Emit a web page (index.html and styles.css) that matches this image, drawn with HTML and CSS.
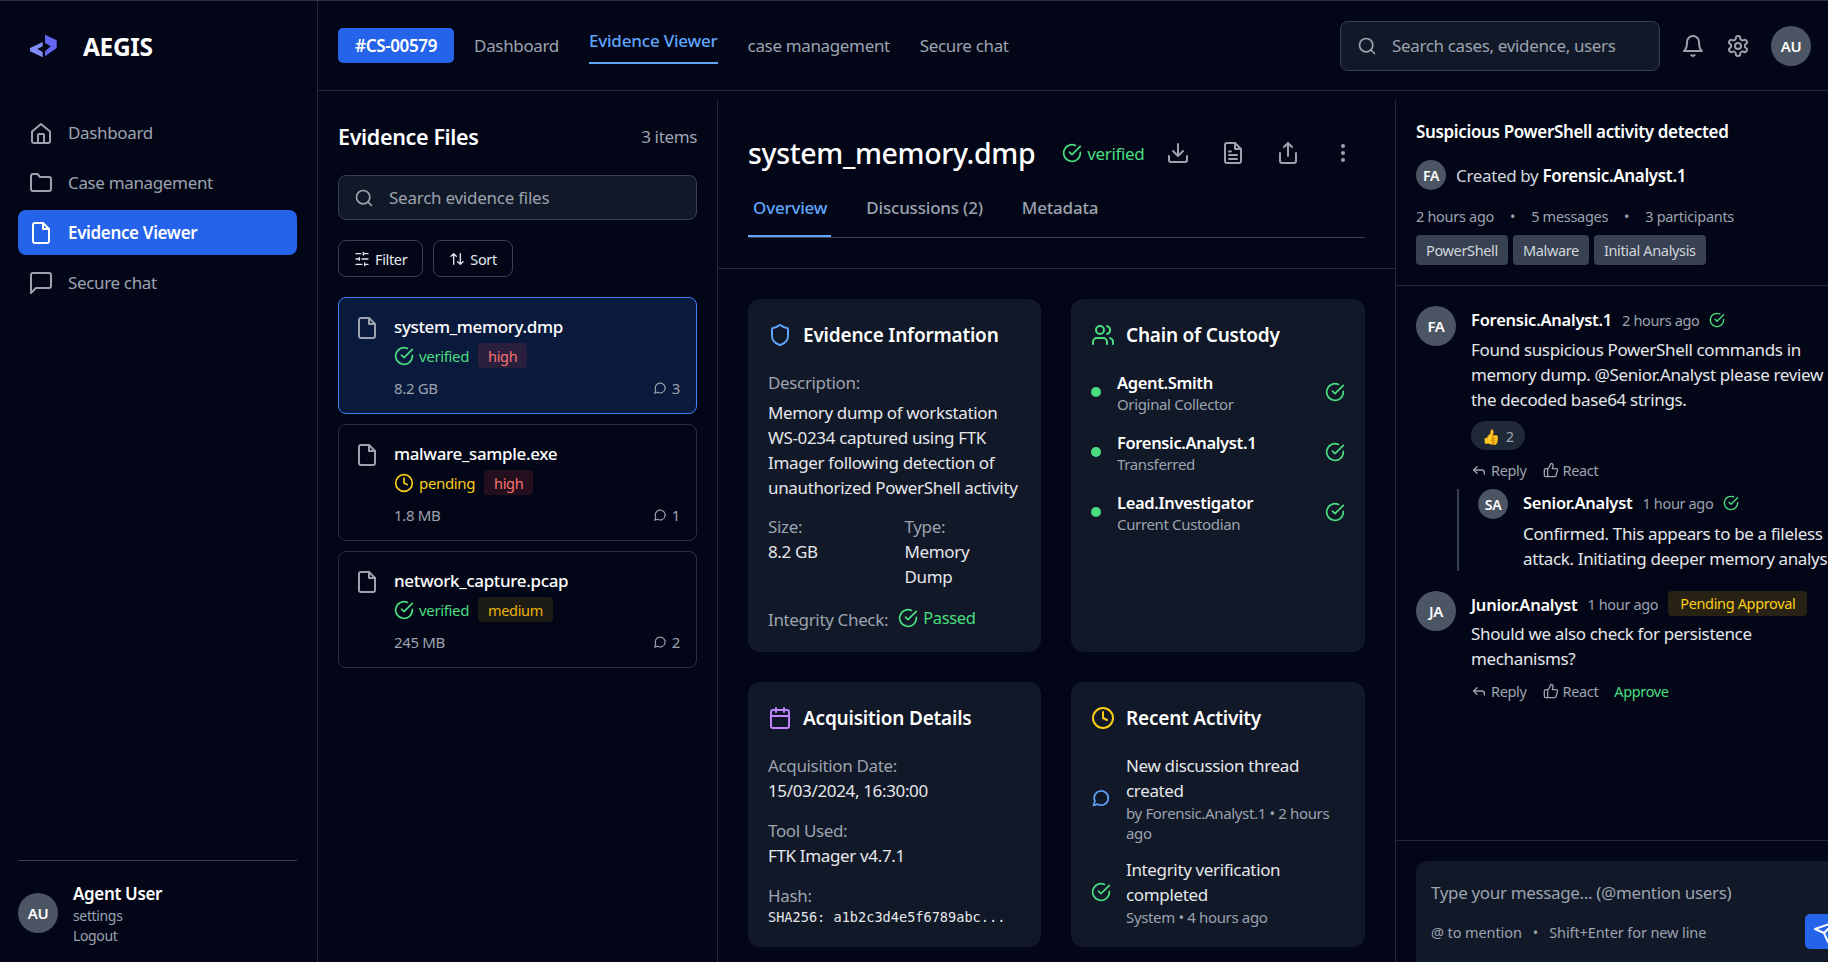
FILE: index.html
```html
<!DOCTYPE html>
<html lang="en">
<head>
    <meta charset="UTF-8">
    <meta name="viewport" content="width=device-width, initial-scale=1.0">
    <title>AEGIS - Evidence Viewer</title>
    <link rel="stylesheet" href="styles.css">
</head>
<body>
    <svg class="icon-defs" width="0" height="0">
        <symbol id="i-home" viewBox="0 0 24 24"><path d="M3 10.5 12 3l9 7.5V20a2 2 0 0 1-2 2H5a2 2 0 0 1-2-2z"/><path d="M9 22v-8a1 1 0 0 1 1-1h4a1 1 0 0 1 1 1v8"/></symbol>
        <symbol id="i-folder" viewBox="0 0 24 24"><path d="M4 20a2 2 0 0 1-2-2V5a2 2 0 0 1 2-2h4.5L11 6h9a2 2 0 0 1 2 2v10a2 2 0 0 1-2 2z"/></symbol>
        <symbol id="i-file" viewBox="0 0 24 24"><path d="M14 2H6a2 2 0 0 0-2 2v16a2 2 0 0 0 2 2h12a2 2 0 0 0 2-2V8z"/><path d="M14 2v6h6"/></symbol>
        <symbol id="i-filetext" viewBox="0 0 24 24"><path d="M14 2H6a2 2 0 0 0-2 2v16a2 2 0 0 0 2 2h12a2 2 0 0 0 2-2V8z"/><path d="M14 2v6h6"/><path d="M8 10.5h2M8 14h8M8 18h8"/></symbol>
        <symbol id="i-square" viewBox="0 0 24 24"><path d="M22 15a2 2 0 0 1-2 2H7l-5 5V4a2 2 0 0 1 2-2h16a2 2 0 0 1 2 2z"/></symbol>
        <symbol id="i-circle" viewBox="0 0 24 24"><path d="M3 21l1.7-5.1A8.5 8.5 0 1 1 8 19.4z"/></symbol>
        <symbol id="i-search" viewBox="0 0 24 24"><circle cx="11" cy="11" r="8"/><path d="m21 21-4.3-4.3"/></symbol>
        <symbol id="i-bell" viewBox="0 0 24 24"><path d="M6 8a6 6 0 0 1 12 0c0 7 3 9 3 9H3s3-2 3-9"/><path d="M10.3 21a2 2 0 0 0 3.4 0"/></symbol>
        <symbol id="i-gear" viewBox="0 0 24 24"><path d="M12.2 2h-.4a2 2 0 0 0-2 2v.2a2 2 0 0 1-1 1.7l-.4.3a2 2 0 0 1-2 0l-.2-.1a2 2 0 0 0-2.7.7l-.2.4a2 2 0 0 0 .7 2.7l.2.1a2 2 0 0 1 1 1.7v.5a2 2 0 0 1-1 1.7l-.2.1a2 2 0 0 0-.7 2.7l.2.4a2 2 0 0 0 2.7.7l.2-.1a2 2 0 0 1 2 0l.4.3a2 2 0 0 1 1 1.7v.2a2 2 0 0 0 2 2h.4a2 2 0 0 0 2-2v-.2a2 2 0 0 1 1-1.7l.4-.3a2 2 0 0 1 2 0l.2.1a2 2 0 0 0 2.7-.7l.2-.4a2 2 0 0 0-.7-2.7l-.2-.1a2 2 0 0 1-1-1.7v-.5a2 2 0 0 1 1-1.7l.2-.1a2 2 0 0 0 .7-2.7l-.2-.4a2 2 0 0 0-2.7-.7l-.2.1a2 2 0 0 1-2 0l-.4-.3a2 2 0 0 1-1-1.7V4a2 2 0 0 0-2-2z"/><circle cx="12" cy="12" r="3"/></symbol>
        <symbol id="i-check" viewBox="0 0 24 24"><path d="M22 11.1V12a10 10 0 1 1-5.9-9.100"/><path d="m9 11 3 3L22 4"/></symbol>
        <symbol id="i-clock" viewBox="0 0 24 24"><circle cx="12" cy="12" r="10"/><path d="M12 6v6l4 2"/></symbol>
        <symbol id="i-sliders" viewBox="0 0 24 24"><path d="M21 4h-7M10 4H3M21 12h-9M8 12H3M21 20h-5M12 20H3M14 2v4M8 10v4M16 18v4"/></symbol>
        <symbol id="i-updown" viewBox="0 0 24 24"><path d="m21 16-4 4-4-4M17 20V4M3 8l4-4 4 4M7 4v16"/></symbol>
        <symbol id="i-download" viewBox="0 0 24 24"><path d="M21 15v4a2 2 0 0 1-2 2H5a2 2 0 0 1-2-2v-4"/><path d="m7 10 5 5 5-5M12 15V3"/></symbol>
        <symbol id="i-share" viewBox="0 0 24 24"><path d="M4 12v8a2 2 0 0 0 2 2h12a2 2 0 0 0 2-2v-8"/><path d="m16 6-4-4-4 4M12 2v13"/></symbol>
        <symbol id="i-shield" viewBox="0 0 24 24"><path d="M20 13c0 5-3.5 7.5-7.7 9a1 1 0 0 1-.6 0C7.5 20.5 4 18 4 13V6a1 1 0 0 1 1-1c2 0 4.5-1.2 6.2-2.7a1.2 1.2 0 0 1 1.600 0C14.5 3.800 17 5 19 5a1 1 0 0 1 1 1z"/></symbol>
        <symbol id="i-users" viewBox="0 0 24 24"><path d="M16 21v-2a4 4 0 0 0-4-4H6a4 4 0 0 0-4 4v2"/><circle cx="9" cy="7" r="4"/><path d="M22 21v-2a4 4 0 0 0-3-3.900M16 3.100a4 4 0 0 1 0 7.800"/></symbol>
        <symbol id="i-calendar" viewBox="0 0 24 24"><rect x="3" y="4" width="18" height="18" rx="2"/><path d="M8 2v4M16 2v4M3 10h18"/></symbol>
        <symbol id="i-reply" viewBox="0 0 24 24"><path d="m9 17-5-5 5-5"/><path d="M20 18v-2a4 4 0 0 0-4-4H4"/></symbol>
        <symbol id="i-thumb" viewBox="0 0 24 24"><path d="M7 10v12"/><path d="M15 5.900 14 10h5.800a2 2 0 0 1 1.900 2.600l-2.300 8a2 2 0 0 1-2 1.400H4a2 2 0 0 1-2-2v-8a2 2 0 0 1 2-2h2.800a2 2 0 0 0 1.800-1.100L12 2a3 3 0 0 1 3 3.900z"/></symbol>
        <symbol id="i-send" viewBox="0 0 24 24"><path d="m22 2-7 20-4-9-9-4z"/><path d="M22 2 11 13"/></symbol>
    </svg>

    <div class="app">
        <aside class="sidebar">
            <div class="logo">
                <svg class="logo-mark" viewBox="0 0 28 24">
                    <path d="M0 14 12.7 8v4.300L7.300 15l5.400 3v5.300L0 17.300z" fill="#818cf8"/>
                    <path d="M15 .7l11.700 5.600V14L15 22.300v-5l5.700-5L15 9z" fill="#6366f1"/>
                </svg>
                <span class="logo-text">AEGIS</span>
            </div>
            <nav class="side-nav">
                <a class="side-link"><svg class="ic ic-24"><use href="#i-home"/></svg>Dashboard</a>
                <a class="side-link"><svg class="ic ic-24"><use href="#i-folder"/></svg>Case management</a>
                <a class="side-link active"><svg class="ic ic-24"><use href="#i-file"/></svg>Evidence Viewer</a>
                <a class="side-link"><svg class="ic ic-24"><use href="#i-square"/></svg>Secure chat</a>
            </nav>
            <div class="side-user">
                <div class="avatar">AU</div>
                <div class="side-user-info">
                    <div class="side-user-name">Agent User</div>
                    <div class="side-user-link">settings</div>
                    <div class="side-user-link">Logout</div>
                </div>
            </div>
        </aside>

        <div class="main">
            <header class="topbar">
                <span class="case-badge">#CS-00579</span>
                <a class="top-link">Dashboard</a>
                <a class="top-link active">Evidence Viewer</a>
                <a class="top-link">case management</a>
                <a class="top-link">Secure chat</a>
                <div class="top-right">
                    <div class="top-search"><svg class="ic ic-20"><use href="#i-search"/></svg><span>Search cases, evidence, users</span></div>
                    <svg class="ic ic-24 top-icon"><use href="#i-bell"/></svg>
                    <svg class="ic ic-24 top-icon"><use href="#i-gear"/></svg>
                    <div class="avatar">AU</div>
                </div>
            </header>

            <div class="columns">
                <section class="files">
                    <div class="files-head">
                        <h2>Evidence Files</h2>
                        <span class="files-count">3 items</span>
                    </div>
                    <div class="files-search"><svg class="ic ic-20"><use href="#i-search"/></svg><span>Search evidence files</span></div>
                    <div class="files-tools">
                        <button class="tool-btn"><svg class="ic ic-16"><use href="#i-sliders"/></svg>Filter</button>
                        <button class="tool-btn"><svg class="ic ic-16"><use href="#i-updown"/></svg>Sort</button>
                    </div>
                    <div class="file-card selected">
                        <svg class="ic ic-24 file-icon"><use href="#i-file"/></svg>
                        <div class="file-body">
                            <div class="file-name">system_memory.dmp</div>
                            <div class="file-status">
                                <span class="status green"><svg class="ic ic-20"><use href="#i-check"/></svg>verified</span>
                                <span class="level high">high</span>
                            </div>
                            <div class="file-meta"><span>8.2 GB</span><span class="file-count"><svg class="ic ic-14"><use href="#i-circle"/></svg>3</span></div>
                        </div>
                    </div>
                    <div class="file-card">
                        <svg class="ic ic-24 file-icon"><use href="#i-file"/></svg>
                        <div class="file-body">
                            <div class="file-name">malware_sample.exe</div>
                            <div class="file-status">
                                <span class="status yellow"><svg class="ic ic-20"><use href="#i-clock"/></svg>pending</span>
                                <span class="level high">high</span>
                            </div>
                            <div class="file-meta"><span>1.8 MB</span><span class="file-count"><svg class="ic ic-14"><use href="#i-circle"/></svg>1</span></div>
                        </div>
                    </div>
                    <div class="file-card">
                        <svg class="ic ic-24 file-icon"><use href="#i-file"/></svg>
                        <div class="file-body">
                            <div class="file-name">network_capture.pcap</div>
                            <div class="file-status">
                                <span class="status green"><svg class="ic ic-20"><use href="#i-check"/></svg>verified</span>
                                <span class="level medium">medium</span>
                            </div>
                            <div class="file-meta"><span>245 MB</span><span class="file-count"><svg class="ic ic-14"><use href="#i-circle"/></svg>2</span></div>
                        </div>
                    </div>
                </section>

                <section class="detail">
                    <div class="detail-head">
                        <div class="detail-title">
                            <h1>system_memory.dmp</h1>
                            <span class="status green detail-status"><svg class="ic ic-20"><use href="#i-check"/></svg>verified</span>
                            <svg class="ic ic-24 action-icon"><use href="#i-download"/></svg>
                            <svg class="ic ic-24 action-icon"><use href="#i-filetext"/></svg>
                            <svg class="ic ic-24 action-icon"><use href="#i-share"/></svg>
                            <span class="dots"><i></i><i></i><i></i></span>
                        </div>
                        <div class="tabs">
                            <a class="tab active">Overview</a>
                            <a class="tab">Discussions (2)</a>
                            <a class="tab">Metadata</a>
                        </div>
                    </div>
                    <div class="detail-grid">
                        <div class="card">
                            <h3><svg class="ic ic-24 blue"><use href="#i-shield"/></svg>Evidence Information</h3>
                            <div class="label">Description:</div>
                            <p class="value desc">Memory dump of workstation WS-0234 captured using FTK Imager following detection of unauthorized PowerShell activity</p>
                            <div class="two-col">
                                <div><div class="label">Size:</div><div class="value">8.2 GB</div></div>
                                <div><div class="label">Type:</div><div class="value">Memory Dump</div></div>
                            </div>
                            <div class="integrity">
                                <span class="label">Integrity Check:</span>
                                <span class="status green passed"><svg class="ic ic-20"><use href="#i-check"/></svg>Passed</span>
                            </div>
                        </div>
                        <div class="card">
                            <h3><svg class="ic ic-24 green"><use href="#i-users"/></svg>Chain of Custody</h3>
                            <div class="custody">
                                <span class="dot"></span>
                                <div class="custody-who"><div class="custody-name">Agent.Smith</div><div class="custody-role">Original Collector</div></div>
                                <svg class="ic ic-20 green"><use href="#i-check"/></svg>
                            </div>
                            <div class="custody">
                                <span class="dot"></span>
                                <div class="custody-who"><div class="custody-name">Forensic.Analyst.1</div><div class="custody-role">Transferred</div></div>
                                <svg class="ic ic-20 green"><use href="#i-check"/></svg>
                            </div>
                            <div class="custody">
                                <span class="dot"></span>
                                <div class="custody-who"><div class="custody-name">Lead.Investigator</div><div class="custody-role">Current Custodian</div></div>
                                <svg class="ic ic-20 green"><use href="#i-check"/></svg>
                            </div>
                        </div>
                        <div class="card">
                            <h3><svg class="ic ic-24 purple"><use href="#i-calendar"/></svg>Acquisition Details</h3>
                            <div class="field">
                                <div class="label">Acquisition Date:</div>
                                <div class="value">15/03/2024, 16:30:00</div>
                            </div>
                            <div class="field">
                                <div class="label">Tool Used:</div>
                                <div class="value">FTK Imager v4.7.1</div>
                            </div>
                            <div class="field">
                                <div class="label">Hash:</div>
                                <div class="hash">SHA256: a1b2c3d4e5f6789abc...</div>
                            </div>
                        </div>
                        <div class="card">
                            <h3><svg class="ic ic-24 yellow"><use href="#i-clock"/></svg>Recent Activity</h3>
                            <div class="activity">
                                <svg class="ic ic-20 blue"><use href="#i-circle"/></svg>
                                <div>
                                    <div class="value">New discussion thread created</div>
                                    <div class="activity-meta">by Forensic.Analyst.1 • 2 hours ago</div>
                                </div>
                            </div>
                            <div class="activity">
                                <svg class="ic ic-20 green"><use href="#i-check"/></svg>
                                <div>
                                    <div class="value">Integrity verification completed</div>
                                    <div class="activity-meta">System • 4 hours ago</div>
                                </div>
                            </div>
                        </div>
                    </div>
                </section>

                <section class="thread">
                    <div class="thread-head">
                        <div class="thread-title">Suspicious PowerShell activity detected</div>
                        <div class="thread-by">
                            <div class="avatar avatar-30">FA</div>
                            <span>Created by <b>Forensic.Analyst.1</b></span>
                        </div>
                        <div class="thread-meta"><span>2 hours ago</span><span class="sep">•</span><span>5 messages</span><span class="sep">•</span><span>3 participants</span></div>
                        <div class="thread-tags"><span class="tag">PowerShell</span><span class="tag">Malware</span><span class="tag">Initial Analysis</span></div>
                    </div>
                    <div class="messages">
                        <div class="msg">
                            <div class="avatar">FA</div>
                            <div class="msg-body">
                                <div class="msg-head"><b>Forensic.Analyst.1</b><span class="msg-time">2 hours ago</span><svg class="ic ic-16 green"><use href="#i-check"/></svg></div>
                                <p>Found suspicious PowerShell commands in memory dump. @Senior.Analyst please review the decoded base64 strings.</p>
                                <span class="reaction">👍 <span>2</span></span>
                                <div class="msg-actions">
                                    <a><svg class="ic ic-16"><use href="#i-reply"/></svg>Reply</a>
                                    <a><svg class="ic ic-16"><use href="#i-thumb"/></svg>React</a>
                                </div>
                                <div class="msg nested">
                                    <div class="avatar avatar-30">SA</div>
                                    <div class="msg-body">
                                        <div class="msg-head"><b>Senior.Analyst</b><span class="msg-time">1 hour ago</span><svg class="ic ic-16 green"><use href="#i-check"/></svg></div>
                                        <p>Confirmed. This appears to be a fileless attack. Initiating deeper memory analysis.</p>
                                    </div>
                                </div>
                            </div>
                        </div>
                        <div class="msg">
                            <div class="avatar">JA</div>
                            <div class="msg-body">
                                <div class="msg-head"><b>Junior.Analyst</b><span class="msg-time">1 hour ago</span><span class="pending-badge">Pending Approval</span></div>
                                <p>Should we also check for persistence mechanisms?</p>
                                <div class="msg-actions">
                                    <a><svg class="ic ic-16"><use href="#i-reply"/></svg>Reply</a>
                                    <a><svg class="ic ic-16"><use href="#i-thumb"/></svg>React</a>
                                    <a class="approve">Approve</a>
                                </div>
                            </div>
                        </div>
                    </div>
                    <div class="composer">
                        <div class="composer-box">
                            <div class="composer-text">Type your message... (@mention users)</div>
                            <div class="composer-hint"><span>@ to mention</span><span class="sep">•</span><span>Shift+Enter for new line</span></div>
                            <span class="send-btn"><svg class="ic ic-24"><use href="#i-send"/></svg></span>
                        </div>
                    </div>
                </section>
            </div>
        </div>
    </div>
</body>
</html>
```

FILE: styles.css
```css
* {
    box-sizing: border-box;
}
html, body {
    height: 100%;
}
body {
    margin: 0;
    background: #020617;
    color: #fff;
    font-family: "Noto Sans", "Open Sans", sans-serif;
    font-size: 16px;
    letter-spacing: -0.35px;
    overflow: hidden;
}
h1, h2, h3, p {
    margin: 0;
}
.icon-defs {
    position: absolute;
}
.ic {
    flex: none;
    fill: none;
    stroke: currentColor;
    stroke-width: 2;
    stroke-linecap: round;
    stroke-linejoin: round;
}
.ic-24 { width: 24px; height: 24px; }
.ic-20 { width: 20px; height: 20px; }
.ic-18 { width: 18px; height: 18px; }
.ic-16 { width: 16px; height: 16px; }
.ic-14 { width: 14px; height: 14px; }
.green { color: #4ade80; }
.yellow { color: #facc15; }
.blue { color: #60a5fa; }
.purple { color: #c084fc; }

.app {
    display: flex;
    height: 962px;
    border-top: 1px solid #2a3040;
}

/* sidebar */
.sidebar {
    width: 318px;
    flex: none;
    display: flex;
    flex-direction: column;
    padding: 0 20px 0 18px;
    border-right: 1px solid #1f2937;
}
.logo {
    display: flex;
    align-items: center;
    gap: 25px;
    height: 90px;
    padding-left: 12px;
}
.logo-mark {
    width: 28px;
    height: 24px;
}
.logo-text {
    font-size: 24.5px;
    font-weight: 700;
}
.side-nav {
    display: flex;
    flex-direction: column;
    gap: 5px;
    margin-top: 19px;
}
.side-link {
    display: flex;
    align-items: center;
    gap: 15px;
    height: 45px;
    padding: 0 11px;
    border-radius: 8px;
    color: #9ca3af;
    font-size: 17px;
}
.side-link.active {
    background: #2563eb;
    color: #fff;
    font-weight: 600;
}
.side-user {
    display: flex;
    align-items: center;
    gap: 15px;
    margin-top: auto;
    height: 102px;
    padding-top: 2px;
    border-top: 1px solid #374151;
}
.avatar {
    width: 40px;
    height: 40px;
    flex: none;
    display: flex;
    align-items: center;
    justify-content: center;
    border-radius: 50%;
    background: #4b5563;
    color: #fff;
    font-size: 15px;
    font-weight: 600;
}
.avatar-30 {
    width: 30px;
    height: 30px;
    font-size: 14px;
}
.side-user-info {
    padding-top: 2px;
}
.side-user-name {
    font-size: 17px;
    font-weight: 600;
    line-height: 24px;
}
.side-user-link {
    font-size: 14px;
    line-height: 20px;
    color: #9ca3af;
}

/* top bar */
.main {
    flex: 1;
    min-width: 0;
    display: flex;
    flex-direction: column;
}
.topbar {
    height: 90px;
    flex: none;
    display: flex;
    align-items: center;
    padding: 0 17px 0 20px;
    border-bottom: 1px solid #1f2937;
}
.case-badge {
    display: flex;
    align-items: center;
    height: 35px;
    padding: 0 17px;
    border-radius: 5px;
    background: #2563eb;
    font-size: 17px;
    font-weight: 600;
    margin-right: 20px;
}
.top-link {
    color: #9ca3af;
    font-size: 17px;
    margin-right: 30px;
}
.top-link.active {
    color: #60a5fa;
    font-weight: 500;
    letter-spacing: -0.2px;
    margin-top: 1px;
    padding-bottom: 10px;
    border-bottom: 2px solid #60a5fa;
}
.top-right {
    display: flex;
    align-items: center;
    gap: 21px;
    margin-left: auto;
}
.top-search {
    display: flex;
    align-items: center;
    gap: 15px;
    width: 320px;
    height: 50px;
    padding: 0 16px;
    border: 1px solid #374151;
    border-radius: 8px;
    background: #111827;
    color: #9ca3af;
    font-size: 17px;
}
.top-icon {
    color: #9ca3af;
}

/* three columns */
.columns {
    flex: 1;
    min-height: 0;
    display: flex;
    padding-top: 9px;
}

/* evidence files */
.files {
    width: 400px;
    flex: none;
    padding: 18px 20px 0;
    border-right: 1px solid #1f2937;
}
.files-head {
    display: flex;
    justify-content: space-between;
    align-items: center;
    height: 36px;
}
.files-head h2 {
    font-size: 21.5px;
    font-weight: 600;
}
.files-count {
    color: #9ca3af;
    font-size: 17px;
}
.files-search {
    display: flex;
    align-items: center;
    gap: 15px;
    height: 45px;
    margin-top: 21px;
    padding: 0 15px;
    border: 1px solid #374151;
    border-radius: 8px;
    background: #111827;
    color: #9ca3af;
    font-size: 17px;
    letter-spacing: -0.25px;
}
.files-tools {
    display: flex;
    gap: 10px;
    margin-top: 20px;
}
.tool-btn {
    display: flex;
    align-items: center;
    gap: 5px;
    height: 37px;
    padding: 0 15px;
    border: 1px solid #374151;
    border-radius: 8px;
    background: transparent;
    color: #e5e7eb;
    font-family: inherit;
    font-size: 14.5px;
    letter-spacing: inherit;
}
.file-card {
    display: flex;
    gap: 15px;
    height: 117px;
    margin-top: 10px;
    padding: 17px 16px;
    border: 1px solid #2a3040;
    border-radius: 8px;
}
.files-tools + .file-card {
    margin-top: 20px;
}
.file-card.selected {
    background: #0a1a3c;
    border-color: #3b82f6;
}
.file-icon {
    color: #9ca3af;
    margin-top: 1px;
}
.file-body {
    flex: 1;
    min-width: 0;
}
.file-name {
    font-size: 17px;
    font-weight: 500;
    line-height: 24px;
}
.file-status {
    display: flex;
    align-items: center;
    gap: 9px;
    margin-top: 4px;
    height: 25px;
}
.status {
    display: inline-flex;
    align-items: center;
    gap: 5px;
    font-size: 15px;
}
.level {
    display: flex;
    align-items: center;
    height: 25px;
    padding: 0 10px;
    border-radius: 4px;
    font-size: 14.5px;
}
.level.high {
    color: #f87171;
    background: rgba(239, 68, 68, 0.14);
}
.level.medium {
    color: #eab308;
    background: rgba(234, 179, 8, 0.12);
}
.file-meta {
    display: flex;
    justify-content: space-between;
    margin-top: 10px;
    color: #9ca3af;
    font-size: 15px;
    line-height: 20px;
}
.file-count {
    display: flex;
    align-items: center;
    gap: 5px;
}

/* detail */
.detail {
    width: 678px;
    flex: none;
    border-right: 1px solid #1f2937;
}
.detail-head {
    height: 169px;
    padding: 28px 30px 0;
    border-bottom: 1px solid #1f2937;
}
.detail-title {
    display: flex;
    align-items: center;
    height: 50px;
}
.detail-title h1 {
    font-size: 28.5px;
    font-weight: 500;
}
.detail-status {
    font-size: 17px;
    margin: 0 22px 0 27px;
}
.action-icon {
    color: #9ca3af;
    margin-right: 31px;
}
.dots {
    display: flex;
    flex-direction: column;
    gap: 3px;
    margin-left: 10px;
}
.dots i {
    width: 4px;
    height: 4px;
    border-radius: 50%;
    background: #9ca3af;
}
.tabs {
    display: flex;
    gap: 30px;
    margin-top: 12px;
    border-bottom: 1px solid #374151;
}
.tab {
    height: 47px;
    padding: 0 4px 0 5px;
    color: #9ca3af;
    font-size: 17px;
    font-weight: 500;
    letter-spacing: -0.2px;
    line-height: 36px;
}
.tab.active {
    color: #60a5fa;
    border-bottom: 2px solid #60a5fa;
    margin-bottom: -1px;
}
.detail-grid {
    display: grid;
    grid-template-columns: 293px 294px;
    grid-template-rows: 353px 265px;
    gap: 30px;
    padding: 30px 30px 0;
}
.card {
    padding: 20px;
    border-radius: 12px;
    background: #111827;
}
.card h3 {
    display: flex;
    align-items: center;
    gap: 11px;
    height: 32px;
    font-size: 19px;
    font-weight: 600;
    letter-spacing: -0.2px;
    margin-bottom: 19px;
}
.label {
    color: #9ca3af;
    font-size: 17px;
    line-height: 25px;
}
.value {
    color: #e5e7eb;
    font-size: 17px;
    line-height: 25px;
}
.desc {
    margin: 5px -8px 0 0;
}
.two-col {
    display: grid;
    grid-template-columns: 1fr 1fr;
    gap: 20px;
    margin-top: 14px;
}
.integrity {
    display: flex;
    align-items: center;
    gap: 10px;
    margin-top: 18px;
}
.passed {
    font-size: 16.5px;
    margin-top: -4px;
}
.custody {
    display: flex;
    align-items: center;
    height: 60px;
    margin-top: -8px;
}
.custody + .custody {
    margin-top: 0;
}
.dot {
    width: 10px;
    height: 10px;
    border-radius: 50%;
    background: #4ade80;
    margin-right: 16px;
}
.custody-who {
    flex: 1;
}
.custody-name {
    font-size: 16.5px;
    font-weight: 600;
    line-height: 23px;
}
.custody-role {
    color: #9ca3af;
    font-size: 15px;
    line-height: 20px;
}
.field {
    margin-bottom: 15px;
}
.hash {
    color: #e5e7eb;
    font-family: "DejaVu Sans Mono", "Liberation Mono", monospace;
    font-size: 13.6px;
    letter-spacing: 0;
    line-height: 18px;
}
.activity {
    display: flex;
    align-items: center;
    gap: 15px;
    margin-bottom: 14px;
}
.activity-meta {
    color: #9ca3af;
    font-size: 15px;
    line-height: 20px;
}

/* discussion thread */
.thread {
    flex: 1;
    min-width: 0;
    overflow: hidden;
    display: flex;
    flex-direction: column;
}
.thread-head {
    height: 186px;
    flex: none;
    padding: 20px 20px 0;
    border-bottom: 1px solid #1f2937;
}
.thread-title {
    font-size: 17px;
    font-weight: 600;
    line-height: 24px;
}
.thread-by {
    display: flex;
    align-items: center;
    gap: 10px;
    margin-top: 16px;
    color: #d1d5db;
    font-size: 17px;
}
.thread-by b {
    color: #fff;
    font-weight: 600;
}
.thread-meta {
    display: flex;
    margin-top: 14px;
    color: #9ca3af;
    font-size: 14.5px;
    letter-spacing: -0.3px;
    line-height: 24px;
}
.sep {
    margin: 0 16px;
}
.thread-tags {
    display: flex;
    gap: 5px;
    margin-top: 7px;
}
.tag {
    display: flex;
    align-items: center;
    height: 30px;
    padding: 0 10px;
    border-radius: 4px;
    background: #374151;
    color: #d1d5db;
    font-size: 14.5px;
}
.messages {
    flex: 1;
    min-height: 0;
    padding: 20px 20px 0;
    border-bottom: 1px solid #1f2937;
}
.msg {
    display: flex;
    gap: 15px;
    width: 540px;
}
.msg + .msg {
    margin-top: 20px;
}
.msg-body {
    width: 362px;
    flex: none;
}
.msg-head {
    display: flex;
    align-items: center;
    gap: 10px;
    height: 27px;
}
.msg-head b {
    font-size: 16.5px;
    font-weight: 600;
    letter-spacing: -0.25px;
}
.msg-time {
    flex: none;
    color: #9ca3af;
    font-size: 14.5px;
}
.msg p {
    color: #e5e7eb;
    font-size: 17px;
    line-height: 25px;
    margin-top: 3.5px;
}
.reaction {
    display: flex;
    align-items: center;
    gap: 6px;
    width: fit-content;
    height: 29px;
    margin: 9.5px 0 2px;
    padding: 0 11px;
    border-radius: 15px;
    background: #1f2937;
    color: #9ca3af;
    font-size: 14.5px;
}
.msg-actions {
    display: flex;
    gap: 16px;
    height: 20px;
    margin-top: 10px;
    color: #9ca3af;
    font-size: 14.5px;
}
.msg-actions a {
    display: flex;
    align-items: center;
    gap: 4px;
}
.msg-actions .approve {
    color: #4ade80;
}
.msg.nested {
    margin-top: 9px;
    margin-left: -14px;
    padding-left: 19px;
    border-left: 2px solid #374151;
}
.nested .msg-body {
    width: 335px;
}
.nested .msg-body p {
    margin-top: 4.5px;
}
.pending-badge {
    flex: none;
    display: flex;
    align-items: center;
    align-self: flex-start;
    height: 25px;
    padding: 0 12px;
    border-radius: 4px;
    background: rgba(234, 179, 8, 0.16);
    color: #facc15;
    font-size: 14.5px;
}
.composer {
    flex: none;
    height: 121px;
    padding: 20px 0 0 20px;
}
.composer-box {
    position: relative;
    width: 600px;
    height: 140px;
    padding: 20px 15px;
    border-radius: 12px;
    background: #111827;
}
.composer-text {
    color: #9ca3af;
    font-size: 17px;
    line-height: 24px;
}
.composer-hint {
    display: flex;
    margin-top: 17px;
    color: #9ca3af;
    font-size: 14.5px;
    letter-spacing: -0.1px;
}
.composer-hint .sep {
    margin: 0 11px;
}
.send-btn {
    position: absolute;
    left: 389px;
    top: 53px;
    width: 40px;
    height: 35px;
    display: flex;
    align-items: center;
    justify-content: center;
    border-radius: 5px;
    background: #2563eb;
}
```
